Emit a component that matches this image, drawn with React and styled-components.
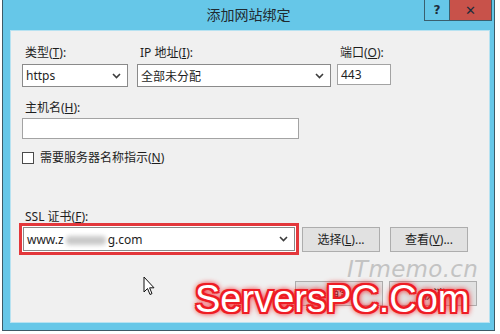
import React from "react";
import styled, { createGlobalStyle } from "styled-components";

const GlobalStyle = createGlobalStyle`
  html, body {
    margin: 0;
    padding: 0;
    background: #ffffff;
  }
  body {
    width: 500px;
    height: 334px;
    overflow: hidden;
    font-family: "Noto Sans", "Noto Sans CJK SC", sans-serif;
    color: #1e1e1e;
  }
`;

const Window = styled.div`
  position: relative;
  box-sizing: border-box;
  margin-left: 2px;
  width: 493px;
  height: 331px;
  background: #66c7e8;
  border: 1px solid #3d5a66;
  border-top: none;
  padding: 0 4px 7px 7px;
  display: flex;
  flex-direction: column;
`;

const TitleBar = styled.div`
  display: grid;
  grid-template-columns: 1fr auto 1fr;
  align-items: start;
  height: 30px;
  margin: 0 -4px 0 -7px;
`;

const Title = styled.div`
  grid-column: 2;
  padding-top: 6px;
  font-size: 14px;
  line-height: 18px;
  color: #1f2a30;
`;

const Controls = styled.div`
  grid-column: 3;
  justify-self: end;
  display: flex;
  margin-right: 2px;
`;

const CtrlButton = styled.div`
  box-sizing: border-box;
  width: ${p => (p.$close ? "42px" : "26px")};
  height: 21px;
  background: ${p => (p.$close ? "#c8524a" : "#66c7e8")};
  border: 1px solid #3a5f6e;
  border-top: none;
  border-left: ${p => (p.$close ? "none" : "1px solid #3a5f6e")};
  display: flex;
  align-items: center;
  justify-content: center;
  font-family: "DejaVu Sans", sans-serif;
  font-weight: bold;
  font-size: ${p => (p.$close ? "13px" : "12px")};
  color: #1d2c3a;
`;

const Content = styled.div`
  position: relative;
  flex: 1;
  background: #f0f0f0;
  border: 1px solid #b7e2f1;
  padding: 14px 0 0 11px;
  display: flex;
  flex-direction: column;
`;

const Row = styled.div`
  display: flex;
  align-items: flex-end;
  gap: ${p => p.$gap || 0}px;
  margin-top: ${p => p.$top || 0}px;
  margin-left: ${p => p.$left || 0}px;
`;

const Field = styled.div`
  display: flex;
  flex-direction: column;
  width: ${p => p.$w}px;
`;

const Label = styled.div`
  font-size: 12px;
  line-height: ${p => p.$lh || 16}px;
  padding-left: 3px;
  margin-bottom: ${p => (p.$mb === undefined ? 3 : p.$mb)}px;
  white-space: nowrap;
`;

const U = styled.span`
  text-decoration: underline;
  text-underline-offset: 1px;
`;

const Box = styled.div`
  box-sizing: border-box;
  height: ${p => p.$h || 23}px;
  width: ${p => (p.$w ? p.$w + "px" : "100%")};
  background: #ffffff;
  border: 1px solid ${p => (p.$dark ? "#8a8a8a" : "#a3a3a3")};
  display: flex;
  align-items: center;
  justify-content: space-between;
  padding: 0 6px 0 3px;
  font-size: 12px;
  white-space: nowrap;
`;

const Chevron = () => (
  <svg width="9" height="6" viewBox="0 0 9 6">
    <polyline points="1,1 4.5,4.5 8,1" fill="none" stroke="#3c3c3c" strokeWidth="1.6" />
  </svg>
);

const CheckRow = styled.label`
  display: flex;
  align-items: center;
  gap: 6px;
  font-size: 12px;
  line-height: 16px;
  margin-top: 11px;
`;

const CheckBox = styled.span`
  box-sizing: border-box;
  width: 12px;
  height: 12px;
  background: #ffffff;
  border: 1px solid #4a4a4a;
`;

const Highlight = styled.div`
  box-sizing: border-box;
  width: 280px;
  height: 32px;
  border: 3px solid #e3373b;
  padding: 1px;
  background: #ffffff;
`;

const Blur = styled.span`
  display: inline-block;
  width: 40px;
  height: 9px;
  margin: 0 2px;
  background: #c9c9c9;
  border-radius: 4px;
  filter: blur(2px);
  vertical-align: middle;
`;

const Button = styled.div`
  box-sizing: border-box;
  width: ${p => p.$w || 78}px;
  height: 25px;
  background: #e1e1e1;
  border: 1px solid #adadad;
  display: flex;
  align-items: center;
  justify-content: center;
  font-size: 12px;
`;

const Footer = styled.div`
  display: flex;
  justify-content: flex-end;
  gap: 6px;
  margin-top: 26px;
  padding-right: 12px;
`;

const Watermark = styled.div`
  position: absolute;
  left: 336px;
  top: 225px;
  font-family: "DejaVu Sans", sans-serif;
  font-style: italic;
  font-size: 23px;
  color: #c3c3c3;
  letter-spacing: 0.3px;
`;

const Stamp = styled.div`
  position: absolute;
  left: 184px;
  top: 245px;
  font-family: "Liberation Sans", Arial, sans-serif;
  font-size: 38px;
  line-height: 46px;
  color: #ffffff;
  white-space: nowrap;
  text-shadow:
    2px 0 0 #ee1c24, -2px 0 0 #ee1c24, 0 2px 0 #ee1c24, 0 -2px 0 #ee1c24,
    2px 2px 0 #ee1c24, -2px -2px 0 #ee1c24, 2px -2px 0 #ee1c24, -2px 2px 0 #ee1c24,
    0 0 5px #ee1c24, 0 0 6px #ee1c24, 0 0 7px #ff2a2a;
`;

const Cursor = styled.svg`
  position: absolute;
  left: 132px;
  top: 245px;
`;

export default function App() {
  return (
    <>
      <GlobalStyle />
      <Window>
        <TitleBar>
          <Title>添加网站绑定</Title>
          <Controls>
            <CtrlButton>?</CtrlButton>
            <CtrlButton $close>✕</CtrlButton>
          </Controls>
        </TitleBar>
        <Content>
          <Row $gap={9}>
            <Field $w={106}>
              <Label>类型(<U>T</U>):</Label>
              <Box $dark>
                https
                <Chevron />
              </Box>
            </Field>
            <Field $w={194}>
              <Label>IP 地址(<U>I</U>):</Label>
              <Box $dark>
                全部未分配
                <Chevron />
              </Box>
            </Field>
            <Field $w={54} style={{ marginLeft: -3 }}>
              <Label>端口(<U>O</U>):</Label>
              <Box $h={21} style={{ marginBottom: 2 }}>443</Box>
            </Field>
          </Row>
          <Row $top={13}>
            <Field $w={277}>
              <Label $mb={2}>主机名(<U>H</U>):</Label>
              <Box $h={21} />
            </Field>
          </Row>
          <CheckRow>
            <CheckBox />
            <span>需要服务器名称指示(<U>N</U>)</span>
          </CheckRow>
          <Row $top={44}>
            <Label $lh={14} $mb={0}>SSL 证书(<U>F</U>):</Label>
          </Row>
          <Row $left={-3} $gap={3} style={{ alignItems: "center", marginTop: -1 }}>
            <Highlight>
              <Box $h={24} $dark>
                <span>
                  www.z<Blur />g.com
                </span>
                <Chevron />
              </Box>
            </Highlight>
            <Button>选择(<U>L</U>)...</Button>
            <Button style={{ marginLeft: 7 }}>查看(<U>V</U>)...</Button>
          </Row>
          <Footer>
            <Button $w={88}>确定</Button>
            <Button $w={88}>取消</Button>
          </Footer>
          <Watermark>ITmemo.cn</Watermark>
          <Cursor width="12" height="20" viewBox="0 0 12 20">
            <path d="M1 1 L1 16 L4.5 12.5 L7 18.5 L9 17.6 L6.6 11.8 L11 11.8 Z" fill="#ffffff" stroke="#111" strokeWidth="1" strokeLinejoin="round" />
          </Cursor>
          <Stamp>ServersPC.Com</Stamp>
        </Content>
      </Window>
    </>
  );
}
